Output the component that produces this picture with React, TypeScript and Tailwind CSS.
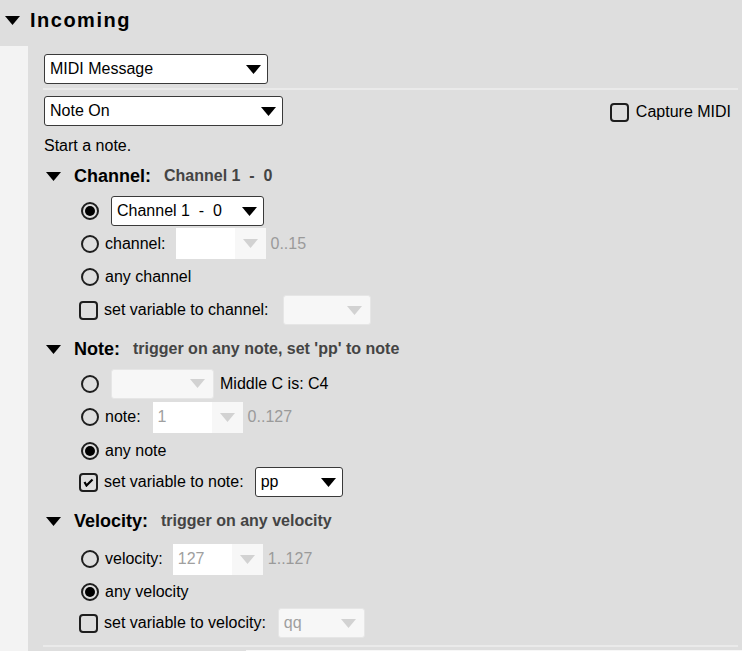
import type { ReactNode } from "react";

const FONT = { fontFamily: '"Liberation Sans", Arial, sans-serif' };

function Tri({ className = "" }: { className?: string }) {
  return (
    <svg width="15" height="9" viewBox="0 0 15 9" className={className}>
      <path d="M0 0 H15 L7.5 9 Z" fill="currentColor" />
    </svg>
  );
}

function Select({ label, w }: { label: string; w: string }) {
  return (
    <div
      className={`${w} h-[30px] shrink-0 flex items-center justify-between bg-white border border-[#3a3a3a] rounded-[3px] pl-[5px] pr-[6px] text-[16px] text-black`}
    >
      <span className="whitespace-pre">{label}</span>
      <Tri className="text-black" />
    </div>
  );
}

/* white combo with shaded arrow section (spin box) */
function Combo({ value, w }: { value: string; w: string }) {
  return (
    <div className={`${w} h-[31px] shrink-0 flex bg-white text-[16px] text-[#a0a0a0]`}>
      <div className="flex-1 flex items-center pl-[5px]">{value}</div>
      <div className="w-[31px] flex items-center justify-center bg-[#f7f7f7]">
        <Tri className="text-[#d2d2d2]" />
      </div>
    </div>
  );
}

function Disabled({ value = "", w }: { value?: string; w: string }) {
  return (
    <div
      className={`${w} h-[30px] shrink-0 flex items-center justify-between bg-[#f7f7f7] border border-[#e6e6e6] rounded-[3px] pl-[5px] pr-[8px] text-[16px] text-[#a0a0a0]`}
    >
      <span>{value}</span>
      <Tri className="text-[#d2d2d2]" />
    </div>
  );
}

function Radio({ on }: { on?: boolean }) {
  return (
    <span className="w-[18px] h-[18px] shrink-0 rounded-full border-2 border-[#1e1e1e] flex items-center justify-center">
      {on && <span className="w-[10px] h-[10px] rounded-full bg-black" />}
    </span>
  );
}

function Check({ on }: { on?: boolean }) {
  return (
    <span className="w-[19px] h-[19px] shrink-0 rounded-[4px] border-2 border-[#1e1e1e] flex items-center justify-center">
      {on && (
        <svg width="11" height="10" viewBox="0 0 11 10">
          <path d="M1.5 5 L3.5 8.5 L9.5 2.5" stroke="black" strokeWidth="2.2" fill="none" />
        </svg>
      )}
    </span>
  );
}

function Row({ h, children, box = "radio", gap = "gap-[6px]" }: { h: string; children: ReactNode; box?: "radio" | "check"; gap?: string }) {
  return (
    <div className={`${h} flex items-center ${gap} ${box === "radio" ? "pl-[37px]" : "pl-[35px]"}`}>
      {children}
    </div>
  );
}

function Section({ title, sub, mt }: { title: string; sub: string; mt: string }) {
  return (
    <div className={`h-[30px] ${mt} flex items-center pl-[2px]`}>
      <Tri className="text-black" />
      <span className="ml-[13px] text-[18px] font-bold text-black">{title}</span>
      <span className="ml-[13px] text-[16px] font-bold text-[#444] whitespace-pre">{sub}</span>
    </div>
  );
}

const Hint = ({ children }: { children: ReactNode }) => (
  <span className="ml-[-1px] text-[16px] text-[#9a9a9a]">{children}</span>
);

export default function App() {
  return (
    <div className="w-[742px] h-[651px] overflow-hidden bg-[#dedede] text-black" style={FONT}>
      <div className="h-[46px] flex items-center pl-[5px] pb-[6px]">
        <Tri className="text-black" />
        <span className="ml-[10px] text-[20px] font-bold tracking-[1.5px]">Incoming</span>
      </div>

      <div className="flex h-[605px]">
        <div className="w-[28px] shrink-0 bg-[#f3f3f3]" />
        <div className="flex-1 pl-[16px]">
          <div className="pt-[8px]">
            <Select label="MIDI Message" w="w-[224px]" />
          </div>
          <div className="mt-[4px] h-[2px] ml-[-1px] mr-[4px] bg-[#eaeaea]" />
          <div className="mt-[6px] flex items-center justify-between pr-[11px]">
            <Select label="Note On" w="w-[239px]" />
            <label className="flex items-center gap-[7px] text-[16px] pt-[2px]">
              <Check />
              Capture MIDI
            </label>
          </div>
          <div className="mt-[10px] text-[16px] leading-[20px]">Start a note.</div>

          <Section title="Channel:" sub="Channel 1  -  0" mt="mt-[5px]" />
          <Row h="h-[32px] mt-[4px]" gap="gap-[12px]">
            <Radio on />
            <Select label="Channel 1  -  0" w="w-[153px]" />
          </Row>
          <Row h="h-[33px]">
            <Radio />
            <span className="text-[16px] mr-[4px]">channel:</span>
            <Combo value="" w="w-[90px]" />
            <Hint>0..15</Hint>
          </Row>
          <Row h="h-[34px]">
            <Radio />
            <span className="text-[16px]">any channel</span>
          </Row>
          <Row h="h-[32px]" box="check">
            <Check />
            <span className="text-[16px] mr-[8px]">set variable to channel:</span>
            <Disabled w="w-[88px]" />
          </Row>

          <Section title="Note:" sub="trigger on any note, set 'pp' to note" mt="mt-[8px]" />
          <Row h="h-[33px] mt-[3px]" gap="gap-[12px]">
            <Radio />
            <Disabled w="w-[103px]" />
            <span className="text-[16px] ml-[-6px]">Middle C is: C4</span>
          </Row>
          <Row h="h-[34px]">
            <Radio />
            <span className="text-[16px] mr-[6px]">note:</span>
            <Combo value="1" w="w-[90px]" />
            <Hint>0..127</Hint>
          </Row>
          <Row h="h-[33px]">
            <Radio on />
            <span className="text-[16px]">any note</span>
          </Row>
          <Row h="h-[30px]" box="check">
            <Check on />
            <span className="text-[16px] mr-[5px]">set variable to note:</span>
            <Select label="pp" w="w-[88px]" />
          </Row>

          <Section title="Velocity:" sub="trigger on any velocity" mt="mt-[9px]" />
          <Row h="h-[34px] mt-[6px]">
            <Radio />
            <span className="text-[16px] mr-[4px]">velocity:</span>
            <Combo value="127" w="w-[90px]" />
            <Hint>1..127</Hint>
          </Row>
          <Row h="h-[32px]">
            <Radio on />
            <span className="text-[16px]">any velocity</span>
          </Row>
          <Row h="h-[30px]" box="check">
            <Check />
            <span className="text-[16px] mr-[6px]">set variable to velocity:</span>
            <Disabled value="qq" w="w-[87px]" />
          </Row>
          <div className="mt-[7px] h-[2px] ml-[-1px] mr-[4px] bg-[#eaeaea]" />
          <div className="mt-[3px] ml-[202px] h-[20px] bg-[#f7f7f7]" />
        </div>
      </div>
    </div>
  );
}
